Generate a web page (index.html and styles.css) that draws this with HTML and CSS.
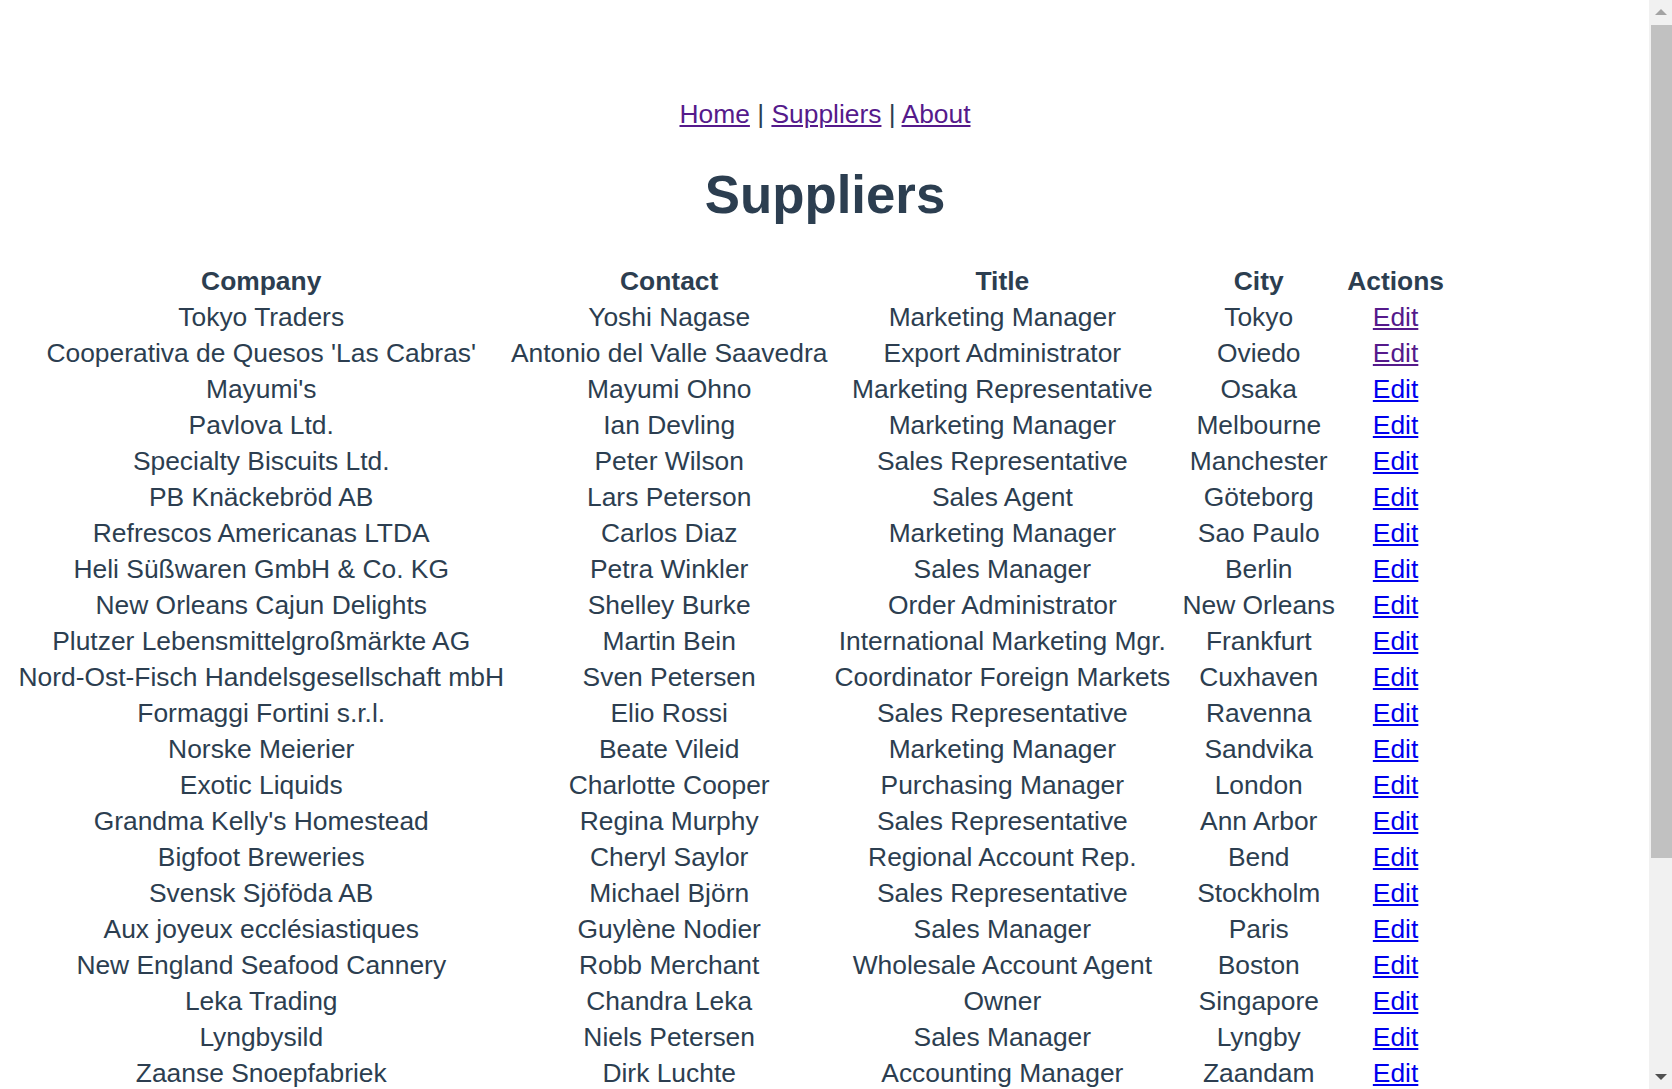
FILE: index.html
```html
<!DOCTYPE html>
<html lang="en">
<head>
<meta charset="utf-8">
<title>Suppliers</title>
<link rel="stylesheet" href="styles.css">
</head>
<body>
<div class="app">
  <div class="nav"><a href="#home" class="visited">Home</a> | <a href="#suppliers" class="visited">Suppliers</a> | <a href="#about" class="visited">About</a></div>
  <h1 class="title">Suppliers</h1>
  <table class="suppliers">
    <thead>
      <tr><th>Company</th><th>Contact</th><th>Title</th><th>City</th><th>Actions</th></tr>
    </thead>
    <tbody>
      <tr><td>Tokyo Traders</td><td>Yoshi Nagase</td><td>Marketing Manager</td><td>Tokyo</td><td><a href="#e1" class="visited">Edit</a></td></tr>
      <tr><td>Cooperativa de Quesos 'Las Cabras'</td><td>Antonio del Valle Saavedra</td><td>Export Administrator</td><td>Oviedo</td><td><a href="#e2" class="visited">Edit</a></td></tr>
      <tr><td>Mayumi's</td><td>Mayumi Ohno</td><td>Marketing Representative</td><td>Osaka</td><td><a href="#e3">Edit</a></td></tr>
      <tr><td>Pavlova Ltd.</td><td>Ian Devling</td><td>Marketing Manager</td><td>Melbourne</td><td><a href="#e4">Edit</a></td></tr>
      <tr><td>Specialty Biscuits Ltd.</td><td>Peter Wilson</td><td>Sales Representative</td><td>Manchester</td><td><a href="#e5">Edit</a></td></tr>
      <tr><td>PB Knäckebröd AB</td><td>Lars Peterson</td><td>Sales Agent</td><td>Göteborg</td><td><a href="#e6">Edit</a></td></tr>
      <tr><td>Refrescos Americanas LTDA</td><td>Carlos Diaz</td><td>Marketing Manager</td><td>Sao Paulo</td><td><a href="#e7">Edit</a></td></tr>
      <tr><td>Heli Süßwaren GmbH &amp; Co. KG</td><td>Petra Winkler</td><td>Sales Manager</td><td>Berlin</td><td><a href="#e8">Edit</a></td></tr>
      <tr><td>New Orleans Cajun Delights</td><td>Shelley Burke</td><td>Order Administrator</td><td>New Orleans</td><td><a href="#e9">Edit</a></td></tr>
      <tr><td>Plutzer Lebensmittelgroßmärkte AG</td><td>Martin Bein</td><td>International Marketing Mgr.</td><td>Frankfurt</td><td><a href="#e10">Edit</a></td></tr>
      <tr><td>Nord-Ost-Fisch Handelsgesellschaft mbH</td><td>Sven Petersen</td><td>Coordinator Foreign Markets</td><td>Cuxhaven</td><td><a href="#e11">Edit</a></td></tr>
      <tr><td>Formaggi Fortini s.r.l.</td><td>Elio Rossi</td><td>Sales Representative</td><td>Ravenna</td><td><a href="#e12">Edit</a></td></tr>
      <tr><td>Norske Meierier</td><td>Beate Vileid</td><td>Marketing Manager</td><td>Sandvika</td><td><a href="#e13">Edit</a></td></tr>
      <tr><td>Exotic Liquids</td><td>Charlotte Cooper</td><td>Purchasing Manager</td><td>London</td><td><a href="#e14">Edit</a></td></tr>
      <tr><td>Grandma Kelly's Homestead</td><td>Regina Murphy</td><td>Sales Representative</td><td>Ann Arbor</td><td><a href="#e15">Edit</a></td></tr>
      <tr><td>Bigfoot Breweries</td><td>Cheryl Saylor</td><td>Regional Account Rep.</td><td>Bend</td><td><a href="#e16">Edit</a></td></tr>
      <tr><td>Svensk Sjöföda AB</td><td>Michael Björn</td><td>Sales Representative</td><td>Stockholm</td><td><a href="#e17">Edit</a></td></tr>
      <tr><td>Aux joyeux ecclésiastiques</td><td>Guylène Nodier</td><td>Sales Manager</td><td>Paris</td><td><a href="#e18">Edit</a></td></tr>
      <tr><td>New England Seafood Cannery</td><td>Robb Merchant</td><td>Wholesale Account Agent</td><td>Boston</td><td><a href="#e19">Edit</a></td></tr>
      <tr><td>Leka Trading</td><td>Chandra Leka</td><td>Owner</td><td>Singapore</td><td><a href="#e20">Edit</a></td></tr>
      <tr><td>Lyngbysild</td><td>Niels Petersen</td><td>Sales Manager</td><td>Lyngby</td><td><a href="#e21">Edit</a></td></tr>
      <tr><td>Zaanse Snoepfabriek</td><td>Dirk Luchte</td><td>Accounting Manager</td><td>Zaandam</td><td><a href="#e22">Edit</a></td></tr>
      <tr><td>Karkki Oy</td><td>Anne Heikkonen</td><td>Product Manager</td><td>Lappeenranta</td><td><a href="#e23">Edit</a></td></tr>
      <tr><td>G'day, Mate</td><td>Wendy Mackenzie</td><td>Sales Representative</td><td>Sydney</td><td><a href="#e24">Edit</a></td></tr>
    </tbody>
  </table>
</div>
<div class="scrollbar" aria-hidden="true">
  <span class="scroll-arrow up"></span>
  <span class="scroll-thumb"></span>
  <span class="scroll-arrow down"></span>
</div>
</body>
</html>
```

FILE: styles.css
```css
html, body {
  margin: 0;
  padding: 0;
  background: #ffffff;
}

.app {
  padding: 99px 30px 40px 8px;
  text-align: center;
  color: #2c3e50;
  font-family: "Liberation Sans", Arial, sans-serif;
  font-size: 26.4px;
}

.nav {
  line-height: 30px;
}

.nav a,
.suppliers a {
  color: #0000ee;
  text-decoration: underline;
}

.nav a.visited,
.suppliers a.visited {
  color: #551a8b;
}

.title {
  margin: 36px 0 0;
  font-size: 52.8px;
  line-height: 60px;
  font-weight: bold;
}

.suppliers {
  margin: 37px 0 0 6px;
  border-spacing: 2px;
  font-size: 26.4px;
}

.suppliers th,
.suppliers td {
  padding: 0 2.5px;
  line-height: 34px;
  text-align: center;
  white-space: nowrap;
}

.suppliers th {
  font-weight: bold;
}

/* imitation of the browser's vertical scrollbar */
.scrollbar {
  position: fixed;
  top: 0;
  right: 0;
  bottom: 0;
  width: 23px;
  background: #f1f1f1;
  display: flex;
  flex-direction: column;
  align-items: center;
}

.scroll-arrow {
  flex: none;
  width: 0;
  height: 0;
  border-left: 6px solid transparent;
  border-right: 6px solid transparent;
}

.scroll-arrow.up {
  margin-top: 9px;
  border-bottom: 6px solid #a3a3a3;
}

.scroll-thumb {
  flex: none;
  width: 21px;
  height: 833px;
  margin: 10px 0 0 1px;
  background: #c1c1c1;
}

.scroll-arrow.down {
  margin-top: auto;
  margin-bottom: 9px;
  border-top: 6px solid #505050;
}
```
